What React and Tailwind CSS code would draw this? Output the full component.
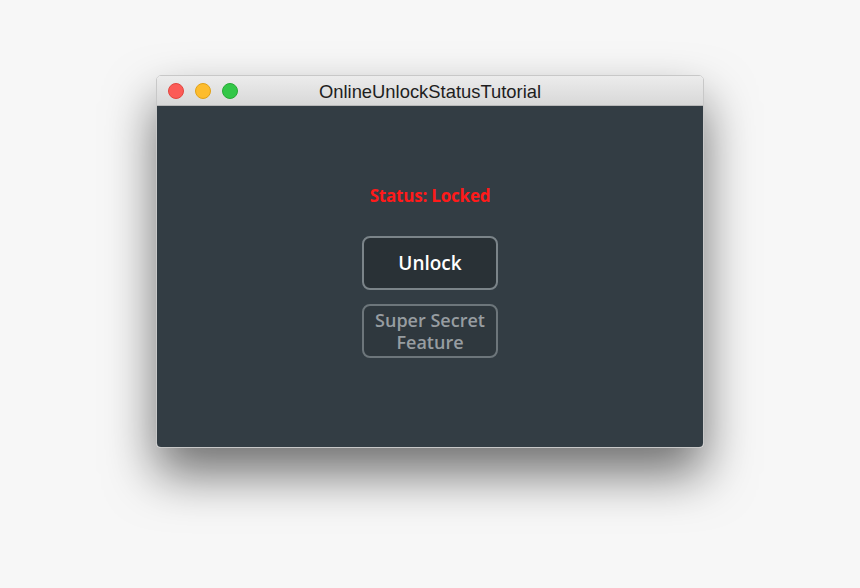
export default function App() {
  return (
    <div className="w-[860px] h-[588px] bg-[#f7f7f7] pt-[75px] pl-[156px] overflow-hidden" style={{ fontFamily: '"Open Sans", "Liberation Sans", sans-serif' }}>
      <div className="w-[548px] h-[373px] rounded-[5px] overflow-hidden flex flex-col shadow-[0_26px_50px_rgba(0,0,0,0.55)] border border-[#c8c8c8]">
        <div className="h-[30px] shrink-0 bg-gradient-to-b from-[#ececec] to-[#d8d8d8] border-b border-[#b8b8b8] flex items-center relative">
          <div className="flex items-center gap-[11px] pl-[11px] pt-[1px]">
            <div className="w-[16px] h-[16px] rounded-full bg-[#fc5b57] border border-[#e2463f]" />
            <div className="w-[16px] h-[16px] rounded-full bg-[#fdbc2e] border border-[#e1a116]" />
            <div className="w-[16px] h-[16px] rounded-full bg-[#33c748] border border-[#27aa35]" />
          </div>
          <div className="absolute inset-0 flex items-center justify-center pt-[2px] text-[18.4px] text-[#1e1e1e]" style={{ fontFamily: '"Liberation Sans", Arial, sans-serif' }}>
            OnlineUnlockStatusTutorial
          </div>
        </div>
        <div className="flex-1 bg-[#333d44] flex flex-col items-center pt-[79px]">
          <div className="text-[17px] font-bold text-[#ff1a1a] leading-[21px] tracking-[-0.2px]">Status: Locked</div>
          <button className="mt-[30px] w-[136px] h-[54px] rounded-[8px] border-2 border-[#7b8489] bg-[#293136] text-white text-[19px] font-semibold leading-none">
            Unlock
          </button>
          <button className="mt-[14px] w-[136px] h-[54px] rounded-[8px] border-2 border-[#6d767b] bg-[#2f383e] text-[#979da1] text-[18px] font-semibold leading-[22px] flex flex-col items-center justify-center">
            <span>Super Secret</span>
            <span>Feature</span>
          </button>
        </div>
      </div>
    </div>
  );
}
